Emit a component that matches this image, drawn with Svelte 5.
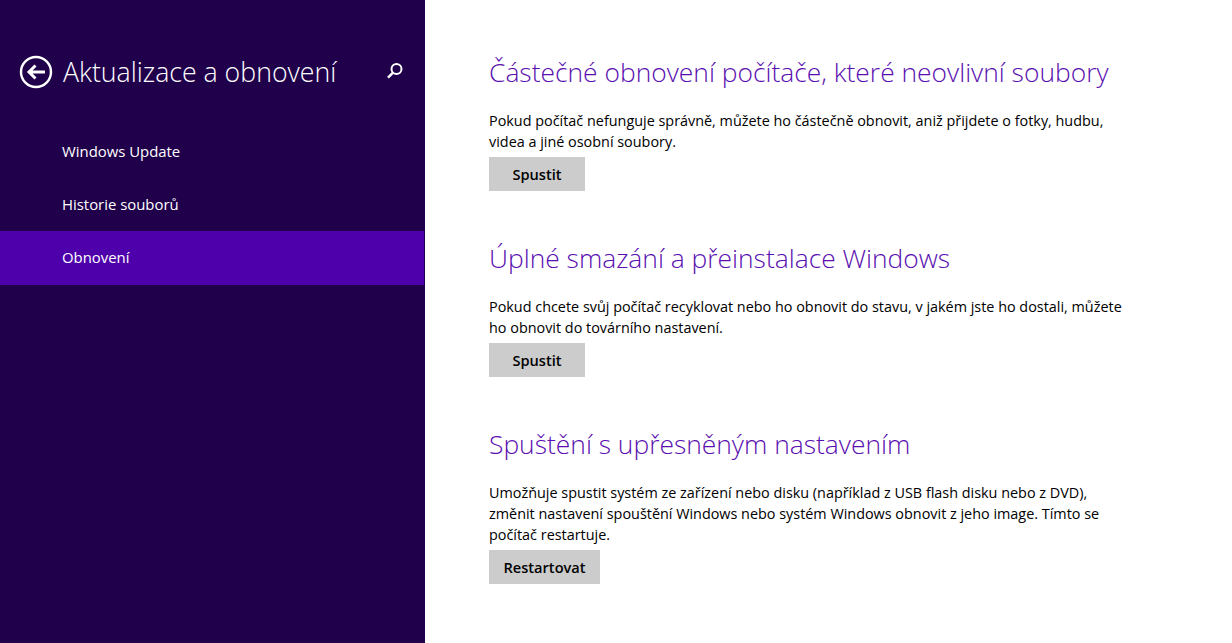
<script lang="ts">
  const sections = [
    {
      title: 'Částečné obnovení počítače, které neovlivní soubory',
      lines: [
        'Pokud počítač nefunguje správně, můžete ho částečně obnovit, aniž přijdete o fotky, hudbu,',
        'videa a jiné osobní soubory.'
      ],
      action: 'Spustit'
    },
    {
      title: 'Úplné smazání a přeinstalace Windows',
      lines: [
        'Pokud chcete svůj počítač recyklovat nebo ho obnovit do stavu, v jakém jste ho dostali, můžete',
        'ho obnovit do továrního nastavení.'
      ],
      action: 'Spustit'
    },
    {
      title: 'Spuštění s upřesněným nastavením',
      lines: [
        'Umožňuje spustit systém ze zařízení nebo disku (například z USB flash disku nebo z DVD),',
        'změnit nastavení spouštění Windows nebo systém Windows obnovit z jeho image. Tímto se',
        'počítač restartuje.'
      ],
      action: 'Restartovat'
    }
  ];
  const nav = ['Windows Update', 'Historie souborů', 'Obnovení'];
</script>

<div class="page">
  <aside class="sidebar">
    <header class="head">
      <svg class="back" width="34" height="34" viewBox="0 0 34 34" aria-hidden="true">
        <circle cx="17" cy="17" r="15" fill="none" stroke="#fff" stroke-width="2.4" />
        <path d="M26 17H10M16.5 10.5L10 17l6.5 6.5" fill="none" stroke="#fff" stroke-width="3" />
      </svg>
      <h1>Aktualizace a obnovení</h1>
      <svg class="search" width="18" height="18" viewBox="0 0 18 18" aria-hidden="true">
        <circle cx="10.5" cy="7" r="5" fill="none" stroke="#fff" stroke-width="2" />
        <path d="M7 10.6L2 15.6" fill="none" stroke="#fff" stroke-width="2.4" />
      </svg>
    </header>
    <nav>
      {#each nav as item, i}
        <div class="item" class:active={i === 2}>{item}</div>
      {/each}
    </nav>
  </aside>

  <main>
    {#each sections as s}
      <section>
        <h2>{s.title}</h2>
        <p>
          {#each s.lines as line}
            <span>{line}</span>
          {/each}
        </p>
        <button type="button">{s.action}</button>
      </section>
    {/each}
  </main>
</div>

<style>
  :global(body) {
    margin: 0;
    background: #fff;
  }
  .page {
    display: flex;
    height: 643px;
    overflow: hidden;
    font-family: 'Open Sans', 'Noto Sans', sans-serif;
  }
  .sidebar {
    width: 425px;
    flex: none;
    background: #20004b;
    color: #fff;
  }
  .head {
    display: flex;
    align-items: center;
    height: 34px;
    padding: 55px 0 0 19px;
  }
  .back {
    flex: none;
  }
  h1 {
    margin: 0 0 0 10px;
    font-size: 26.7px;
    font-weight: 300;
    line-height: 34px;
    white-space: nowrap;
    flex: 1;
  }
  .search {
    flex: none;
    margin: -2px 21px 0 0;
  }
  nav {
    margin-top: 36px;
  }
  .item {
    height: 53px;
    line-height: 53px;
    padding-left: 62px;
    font-size: 14.9px;
  }
  .item.active {
    width: 362px;
    height: 54px;
    background: #4e00aa;
  }
  main {
    flex: 1;
    padding: 52px 0 0 64px;
  }
  section {
    height: 186px;
  }
  h2 {
    margin: 0;
    padding-top: 1px;
    font-size: 26.4px;
    font-weight: 300;
    line-height: 38px;
    color: #5a0fb0;
    white-space: nowrap;
  }
  p {
    margin: 19px 0 5px;
    font-size: 14.4px;
    line-height: 21px;
    color: #000;
  }
  p span {
    display: block;
    white-space: nowrap;
  }
  button {
    display: block;
    height: 34px;
    min-width: 96px;
    padding: 0 14.5px;
    border: 0;
    background: #cccccc;
    color: #000;
    font: 600 14.6px 'Open Sans', 'Noto Sans', sans-serif;
  }
</style>
